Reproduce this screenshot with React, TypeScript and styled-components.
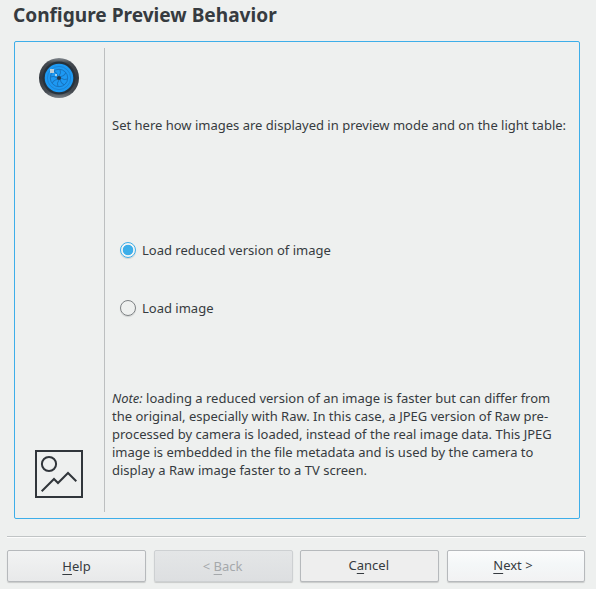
import React from 'react';
import styled, { createGlobalStyle, css } from 'styled-components';

const GlobalStyle = createGlobalStyle`
  * { box-sizing: border-box; }
  body {
    margin: 0;
    background: #eef0ef;
    color: #363b40;
    font: 13px/18px "Noto Sans", sans-serif;
  }
`;

const Dialog = styled.div`
  display: flex;
  flex-direction: column;
  width: 596px;
  height: 589px;
  overflow: hidden;
`;

const Title = styled.h1`
  margin: 0;
  height: 41px;
  padding: 2px 0 0 13px;
  font-size: 19.1px;
  line-height: 26px;
  font-weight: 700;
  white-space: nowrap;
`;

const Panel = styled.main`
  display: flex;
  width: 566px;
  height: 478px;
  margin-left: 14px;
  padding: 6px 0;
  border: 1px solid #3daee9;
  border-radius: 2px;
`;

const SideBar = styled.aside`
  display: flex;
  flex-direction: column;
  justify-content: space-between;
  width: 90px;
  height: 464px;
  padding: 10px 0 14px;
  border-right: 1px solid #bcbfc0;

  svg { display: block; }
  svg:first-child { margin-left: 24px; }
  svg:last-child { margin-left: 20px; }
`;

const Content = styled.section`
  display: flex;
  flex-direction: column;
  padding: 68px 0 0 7px;
  white-space: nowrap;
`;

const Intro = styled.p`
  margin: 0 0 107px;
`;

const Options = styled.div`
  display: flex;
  flex-direction: column;
  gap: 40px;
  padding-left: 8px;
`;

const Option = styled.label`
  display: flex;
  align-items: center;
  gap: 6px;
  height: 18px;
`;

const Radio = styled.input`
  appearance: none;
  width: 16px;
  height: 16px;
  margin: 0;
  border: 1px solid #7d8184;
  border-radius: 50%;
  box-shadow: 0 1px 1px rgba(0, 0, 0, 0.12);

  &:checked {
    border-color: #3daee9;
    background: radial-gradient(circle, #3daee9 4.9px, #f2f4f4 5.6px);
  }
`;

const Note = styled.p`
  margin: 72px 0 0;
`;

const Divider = styled.hr`
  width: 579px;
  height: 2px;
  margin: 17px 0 12px 7px;
  border: 0;
  border-top: 1px solid #c0c4c5;
  border-bottom: 1px solid #fcfcfc;
`;

const ButtonBar = styled.footer`
  display: flex;
  justify-content: space-between;
  width: 578px;
  margin-left: 7px;
`;

type Tone = 'plain' | 'disabled' | 'flat' | 'primary';

const tones = {
  plain: css`background: linear-gradient(#f2f3f3, #e8e9ea);`,
  disabled: css`
    background: linear-gradient(#e4e6e7, #dddfe1);
    border-color: #cdd0d2;
    color: #a5a8ab;
  `,
  flat: css`background: #eeeeee;`,
  primary: css`
    width: 138px;
    background: linear-gradient(#fbfcfc, #f4f7f8 45%, #f2f2f3);
  `,
};

const Button = styled.button<{ $tone: Tone }>`
  width: 139px;
  height: 32px;
  padding: 0;
  border: 1px solid #b6b9bc;
  border-radius: 2px;
  box-shadow: 0 1px 1px rgba(0, 0, 0, 0.16);
  color: #363b40;
  font: inherit;
  ${({ $tone }) => tones[$tone]}
`;

const ButtonLabel = styled.span<{ $rise?: number; $shift?: number }>`
  display: block;
  padding-bottom: ${({ $rise = 0 }) => $rise * 2}px;
  padding-right: ${({ $shift = 0 }) => $shift * 2}px;
`;

const Key = styled.u`
  text-decoration-thickness: 1px;
  text-underline-offset: 3px;
  text-decoration-skip-ink: none;
`;

const LensIcon = () => (
  <svg width="40" height="40" viewBox="0 0 40 40">
    <defs>
      <linearGradient id="rim" x1="0" y1="0" x2="0" y2="1">
        <stop offset="0" stopColor="#858b91" />
        <stop offset=".12" stopColor="#444a50" />
        <stop offset=".5" stopColor="#33383e" />
        <stop offset=".85" stopColor="#464c52" />
        <stop offset="1" stopColor="#7a8086" />
      </linearGradient>
    </defs>
    <circle cx="20" cy="20" r="20" fill="url(#rim)" />
    <circle cx="20" cy="20" r="16.5" fill="#26323c" />
    <circle cx="20" cy="20" r="14.3" fill="#1d99f3" />
    <g fill="none" stroke="#1873bd" strokeWidth="1">
      <circle cx="20" cy="20" r="11.6" stroke="#1b84d5" />
      <circle cx="20" cy="20" r="8.7" />
      {[0, 45, 90, 135, 180, 225, 270, 315].map((angle) => (
        <path key={angle} d="M20 18Q22.6 15 21 11.5" transform={`rotate(${angle} 20 20)`} />
      ))}
    </g>
    <circle cx="20" cy="20" r="2.1" fill="#273948" />
    <rect x="11" y="11" width="4" height="4" fill="#bdcdd6" />
    <rect x="16" y="16" width="2" height="2" fill="#a9d3ec" />
  </svg>
);

const PictureIcon = () => (
  <svg width="48" height="48" viewBox="0 0 48 48" fill="none" stroke="#31363b" strokeWidth="2">
    <rect x="1" y="1" width="46" height="46" />
    <circle cx="14" cy="14" r="7.1" />
    <path d="M6.7 41.3 19 29l4 4 10-10 8.3 8.3" />
  </svg>
);

export default function App() {
  return (
    <>
      <GlobalStyle />
      <Dialog>
        <Title>Configure Preview Behavior</Title>
        <Panel>
          <SideBar>
            <LensIcon />
            <PictureIcon />
          </SideBar>
          <Content>
            <Intro>Set here how images are displayed in preview mode and on the light table:</Intro>
            <Options>
              <Option><Radio type="radio" name="load" defaultChecked />Load reduced version of image</Option>
              <Option><Radio type="radio" name="load" />Load image</Option>
            </Options>
            <Note>
              <em>Note:</em> loading a reduced version of an image is faster but can differ from<br />
              the original, especially with Raw. In this case, a JPEG version of Raw pre-<br />
              processed by camera is loaded, instead of the real image data. This JPEG<br />
              image is embedded in the file metadata and is used by the camera to<br />
              display a Raw image faster to a TV screen.
            </Note>
          </Content>
        </Panel>
        <Divider />
        <ButtonBar>
          <Button $tone="plain"><ButtonLabel><Key>H</Key>elp</ButtonLabel></Button>
          <Button $tone="disabled" disabled><ButtonLabel $shift={0.5}>&lt; <Key>B</Key>ack</ButtonLabel></Button>
          <Button $tone="flat"><ButtonLabel $rise={1} $shift={1}>C<Key>a</Key>ncel</ButtonLabel></Button>
          <Button $tone="primary"><ButtonLabel $rise={1} $shift={3}><Key>N</Key>ext &gt;</ButtonLabel></Button>
        </ButtonBar>
      </Dialog>
    </>
  );
}
